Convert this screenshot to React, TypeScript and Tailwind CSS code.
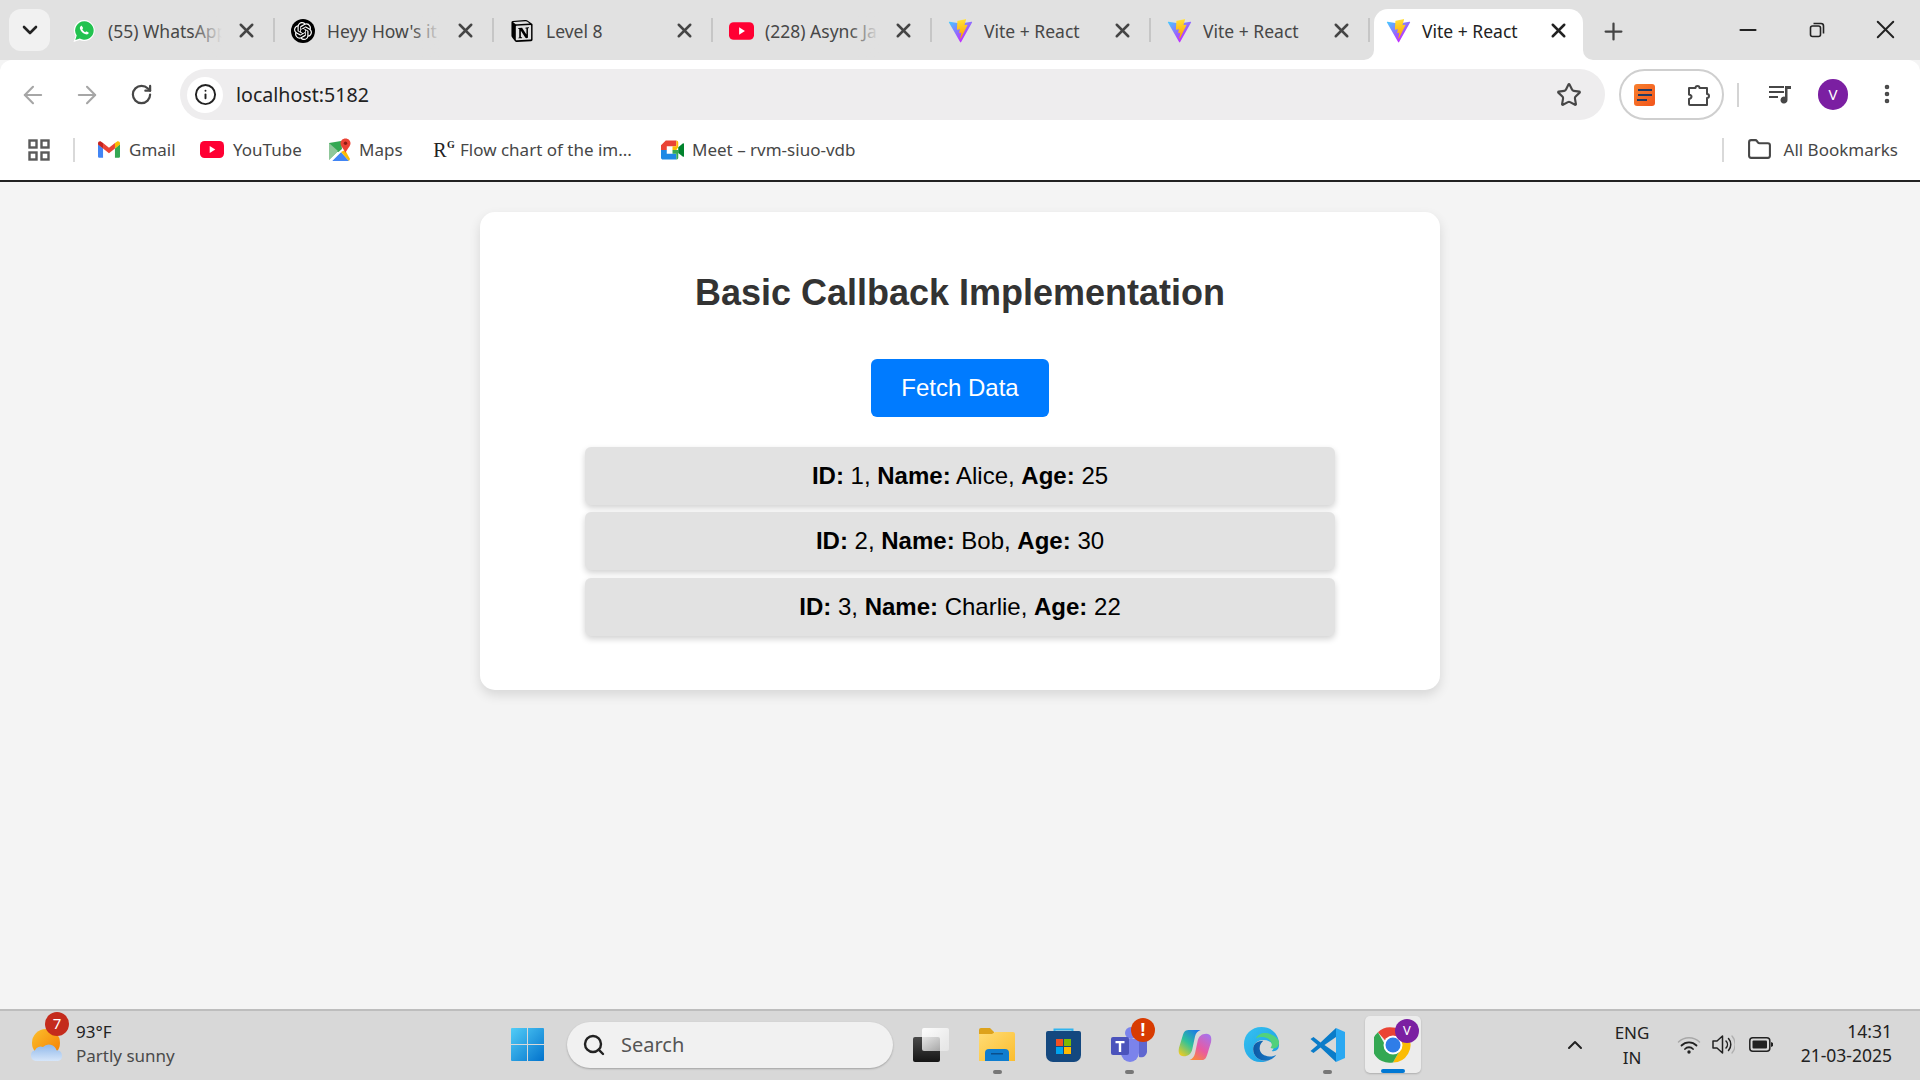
import React from 'react';
import { ArrowLeft, ArrowRight, ChevronDown, ChevronUp, Folder, Info, Minus, MoreVertical, Plus, RotateCw, Search, Star, X } from 'lucide-react';
import { SiNotion, SiOpenai } from 'react-icons/si';

function ViteIcon() {
  return (
    <svg viewBox="0 0 410 404" className="h-[24px] w-[25px]" aria-hidden>
      <defs>
        <linearGradient id="vite-a" x1="6" y1="33" x2="235" y2="344" gradientUnits="userSpaceOnUse">
          <stop stopColor="#41D1FF" />
          <stop offset="1" stopColor="#BD34FE" />
        </linearGradient>
        <linearGradient id="vite-b" x1="194" y1="8" x2="236" y2="293" gradientUnits="userSpaceOnUse">
          <stop stopColor="#FFEA83" />
          <stop offset="0.08" stopColor="#FFDD35" />
          <stop offset="1" stopColor="#FFA800" />
        </linearGradient>
      </defs>
      <path d="M399.641 59.5246L215.643 388.545C211.844 395.338 202.084 395.378 198.228 388.618L10.5817 59.5563C6.38087 52.1896 12.6802 43.2665 21.0281 44.7586L205.223 77.6824C206.398 77.8924 207.601 77.8904 208.776 77.6763L389.119 44.8058C397.439 43.2894 403.768 52.1434 399.641 59.5246Z" fill="url(#vite-a)" />
      <path d="M292.965 1.5744L156.801 28.2552C154.563 28.6937 152.906 30.5903 152.771 32.8664L144.395 174.33C144.198 177.662 147.258 180.248 150.51 179.498L188.42 170.749C191.967 169.931 195.172 173.055 194.443 176.622L183.18 231.775C182.422 235.487 185.907 238.661 189.532 237.56L212.947 230.446C216.577 229.344 220.065 232.527 219.297 236.242L201.398 322.875C200.278 328.294 207.486 331.249 210.492 326.603L212.5 323.5L323.454 102.072C325.312 98.3645 322.108 94.137 318.036 94.9228L279.014 102.454C275.347 103.161 272.227 99.746 273.262 96.1583L298.731 7.86689C299.767 4.27314 296.636 0.855181 292.965 1.5744Z" fill="url(#vite-b)" />
    </svg>
  );
}

function WhatsappIcon() {
  return (
    <svg viewBox="0 0 24 24" className="h-[24px] w-[24px]" aria-hidden>
      <path d="M12.500 1A10.500 10.500 0 0 0 3.500 17L1.500 23l6.200-2A10.500 10.500 0 1 0 12.500 1z" fill="#fff" />
      <path d="M12.500 2.200A9.300 9.300 0 0 0 4.700 16.600L3.300 21l4.500-1.400A9.300 9.300 0 1 0 12.500 2.200z" fill="#22c24f" />
      <path d="M9 7c.3-.3.7-.3.9 0l1.100 1.700c.2.3.1.6-.1.8l-.6.7c.6 1.300 1.700 2.400 3 3l.7-.6c.2-.2.5-.3.8-.1l1.700 1.100c.3.2.3.6 0 .9-.7.800-1.700 1.100-2.700.8-2.900-.8-5.100-3-5.900-5.900-.2-1 .3-1.700 1.100-2.400z" fill="#fff" />
    </svg>
  );
}

function YoutubeIcon({ small }: { small?: boolean }) {
  return (
    <svg viewBox="0 0 24 17" className={small ? 'h-[17px] w-[24px]' : 'h-[18px] w-[25px]'} aria-hidden>
      <rect width="24" height="17" rx="4.500" fill="#ff0033" />
      <path d="M9.700 5v7l5.600-3.500z" fill="#fff" />
    </svg>
  );
}

function GmailIcon() {
  return (
    <svg viewBox="0 0 24 18" className="h-[17px] w-[22px]" aria-hidden>
      <path d="M0 3v13.500C0 17.300.7 18 1.500 18H5.500V8L0 3z" fill="#4285f4" />
      <path d="M24 3v13.500c0 .8-.7 1.500-1.500 1.500h-4V8L24 3z" fill="#34a853" />
      <path d="M18.500 2v6L24 3.500V2.200C24 .4 22 -.6 20.500.5z" fill="#fbbc04" />
      <path d="M5.500 8V2L12 7l6.500-5v6L12 13z" fill="#ea4335" />
      <path d="M0 2.200V3.500L5.500 8V2L3.500.5C2 -.6 0 .4 0 2.200z" fill="#c5221f" />
    </svg>
  );
}

function MapsIcon() {
  return (
    <svg viewBox="0 0 24 24" className="h-[24px] w-[24px]" aria-hidden>
      <path d="M1 5l12-2 1 8-13 11z" fill="#34a853" />
      <path d="M4 23l9-9 8 9z" fill="#4285f4" />
      <path d="M13 14l8 9 1-2-5-9z" fill="#fbbc04" />
      <path d="M1 22l8-8 4 0-9 9z" fill="#fff" />
      <path d="M1 5l9 8-9 9z" fill="#8fc79a" />
      <path d="M17.500 0.500c-3 0-5 2.200-5 4.800 0 3.200 3.500 5.700 5 9.700 1.500-4 5-6.500 5-9.700 0-2.600-2-4.800-5-4.800z" fill="#ea4335" />
      <circle cx="17.500" cy="5.300" r="1.700" fill="#8c1c13" />
    </svg>
  );
}

function MeetIcon() {
  return (
    <svg viewBox="0 0 24 20" className="h-[20px] w-[23px]" aria-hidden>
      <path d="M5 0h11v6H6v4H0V5z" fill="#ea4335" />
      <path d="M0 10h6v4h10v6H2c-1 0-2-1-2-2z" fill="#1e88e5" />
      <path d="M16 0c1 0 2 1 2 2v5l-2 3h-4V6h4z" fill="#fbbc04" />
      <path d="M12 10h6v8c0 1-1 2-2 2v-6h-4z" fill="#34a853" />
      <path d="M18 7l5-4c.5-.3 1 0 1 .6v12.800c0 .6-.5.9-1 .6l-5-4z" fill="#00832d" />
    </svg>
  );
}

function ExtensionIcon() {
  return (
    <svg viewBox="0 0 24 24" className="h-[24px] w-[24px]" fill="none" stroke="#474747" strokeWidth="2" strokeLinejoin="round" aria-hidden>
      <path d="M2 5h6.500a2 2 0 0 1 4 0H20v6a2 2 0 0 1 0 4v7H3a1 1 0 0 1-1-1v-5c2-.5 2.500-1.500 2.500-2.500S4 12 2 11.500z" />
    </svg>
  );
}

function MediaIcon() {
  return (
    <svg viewBox="0 0 24 24" className="h-[24px] w-[24px]" fill="#474747" aria-hidden>
      <path d="M1 4h15v2H1zM1 9h15v2H1zM1 14h9v2H1z" />
      <path d="M17 4h6v3h-3.500v11a3.500 3.500 0 1 1-2.500-3.300z" />
    </svg>
  );
}

function AppsIcon() {
  return (
    <svg viewBox="0 0 22 22" className="h-[22px] w-[22px]" fill="none" stroke="#5a5a5a" strokeWidth="2.400" aria-hidden>
      <rect x="1.500" y="1.500" width="7" height="7" />
      <rect x="13.500" y="1.500" width="7" height="7" />
      <rect x="1.500" y="13.500" width="7" height="7" />
      <rect x="13.500" y="13.500" width="7" height="7" />
    </svg>
  );
}

function RestoreIcon() {
  return (
    <svg viewBox="0 0 16 16" className="h-[16px] w-[16px]" fill="none" stroke="#222" strokeWidth="1.600" aria-hidden>
      <rect x="1.500" y="4" width="10" height="10.500" rx="2" />
      <path d="M4.500 1.500h7.500a2.500 2.500 0 0 1 2.500 2.500v7.500" />
    </svg>
  );
}

function WeatherIcon() {
  return (
    <svg viewBox="0 0 36 36" className="h-[36px] w-[36px]" aria-hidden>
      <defs>
        <linearGradient id="sun" x1="0" y1="0" x2="1" y2="1">
          <stop stopColor="#fbc02d" />
          <stop offset="1" stopColor="#f57c00" />
        </linearGradient>
        <linearGradient id="cloud" x1="0" y1="0" x2="0" y2="1">
          <stop stopColor="#8fb8ea" />
          <stop offset="1" stopColor="#d6e6fa" />
        </linearGradient>
      </defs>
      <circle cx="16" cy="16" r="14" fill="url(#sun)" />
      <path d="M6 34a5.500 5.500 0 0 1-1-10.800A6 6 0 0 1 13 20a8 8 0 0 1 13.500 3.200A5.500 5.500 0 0 1 28 34z" fill="url(#cloud)" />
    </svg>
  );
}

function WindowsIcon() {
  return (
    <svg viewBox="0 0 35 35" className="h-[35px] w-[35px]" aria-hidden>
      <defs>
        <linearGradient id="win" x1="0" y1="0" x2="1" y2="1">
          <stop stopColor="#52cdf7" />
          <stop offset="1" stopColor="#0272cc" />
        </linearGradient>
      </defs>
      <path d="M1 2a1 1 0 0 1 1-1h15v16H1zM18 1h15a1 1 0 0 1 1 1v15H18zM1 18h16v16H2a1 1 0 0 1-1-1zM18 18h16v15a1 1 0 0 1-1 1H18z" fill="url(#win)" />
    </svg>
  );
}

function TaskViewIcon() {
  return (
    <svg viewBox="0 0 36 34" className="h-[34px] w-[36px]" aria-hidden>
      <defs>
        <linearGradient id="tv-dark" x1="0" y1="0" x2="0" y2="1">
          <stop stopColor="#4a4a4a" />
          <stop offset="1" stopColor="#151515" />
        </linearGradient>
        <linearGradient id="tv-light" x1="0" y1="0" x2="1" y2="1">
          <stop stopColor="#ffffff" stopOpacity="0.95" />
          <stop offset="1" stopColor="#f0f0f0" stopOpacity="0.55" />
        </linearGradient>
      </defs>
      <rect x="0" y="9" width="27" height="25" rx="2" fill="url(#tv-dark)" />
      <rect x="9" y="0" width="27" height="23" rx="2" fill="url(#tv-light)" />
    </svg>
  );
}

function FilesIcon() {
  return (
    <svg viewBox="0 0 36 33" className="h-[33px] w-[36px]" aria-hidden>
      <defs>
        <linearGradient id="files" x1="0" y1="0" x2="1" y2="1">
          <stop stopColor="#ffdc75" />
          <stop offset="1" stopColor="#fbbd2e" />
        </linearGradient>
      </defs>
      <path d="M0 2a2 2 0 0 1 2-2h9l4 4 0 2H0z" fill="#dda21b" />
      <path d="M0 6l13 0 3-2h18a2 2 0 0 1 2 2v27H0z" fill="url(#files)" />
      <path d="M6 25a4 4 0 0 1 4-4h16a4 4 0 0 1 4 4v8H6z" fill="#0f7dcf" />
      <rect x="12" y="25" width="12" height="1.500" fill="#0a4f8c" />
    </svg>
  );
}

function StoreIcon() {
  return (
    <svg viewBox="0 0 35 35" className="h-[35px] w-[35px]" aria-hidden>
      <path d="M8.500 8V2.500h18V8" fill="none" stroke="#30b3ee" strokeWidth="2" />
      <path d="M0 6a2 2 0 0 1 2-2h31a2 2 0 0 1 2 2v22a7 7 0 0 1-7 7H7a7 7 0 0 1-7-7z" fill="#14487f" />
      <rect x="10" y="12" width="7" height="7" fill="#f25022" />
      <rect x="18" y="12" width="7" height="7" fill="#7fba00" />
      <rect x="10" y="20" width="7" height="7" fill="#00a4ef" />
      <rect x="18" y="20" width="7" height="7" fill="#ffb900" />
    </svg>
  );
}

function TeamsIcon() {
  return (
    <svg viewBox="0 0 36 36" className="h-[36px] w-[36px]" aria-hidden>
      <circle cx="20" cy="6" r="6" fill="#7b83eb" />
      <path d="M10 12h18v14a9 9 0 0 1-18 0z" fill="#7b83eb" />
      <path d="M28 12h8v12a6 6 0 0 1-8 6z" fill="#5f67d0" />
      <rect x="0" y="10" width="18" height="18" rx="2" fill="#4b53bc" />
      <path d="M4.500 14h9v2.300h-3.300V25H7.800v-8.700H4.500z" fill="#fff" />
    </svg>
  );
}

function CopilotIcon() {
  return (
    <svg viewBox="0 0 36 34" className="h-[32px] w-[34px]" aria-hidden>
      <defs>
        <linearGradient id="cop-a" x1="0.800" y1="0" x2="0.100" y2="1">
          <stop stopColor="#1a78e8" />
          <stop offset="0.5" stopColor="#2fc29a" />
          <stop offset="1" stopColor="#f6cc1f" />
        </linearGradient>
        <linearGradient id="cop-b" x1="0.800" y1="0" x2="0.200" y2="1">
          <stop stopColor="#a873ea" />
          <stop offset="0.55" stopColor="#e85aa2" />
          <stop offset="1" stopColor="#fa8a3a" />
        </linearGradient>
      </defs>
      <path d="M24 1H11C7 1 6 4 5 7L1 20c-1 5 0 9 5 9 5 0 8-3 9-7l3-14c1-4 3-6 6-7z" fill="url(#cop-a)" />
      <path d="M12 33h13c4 0 5-3 6-6l4-13c1-5 0-9-5-9-5 0-8 3-9 7l-3 14c-1 4-3 6-6 7z" fill="url(#cop-b)" />
    </svg>
  );
}

function EdgeIcon() {
  return (
    <svg viewBox="0 0 40 40" className="h-[37px] w-[37px]" aria-hidden>
      <defs>
        <linearGradient id="edge-a" x1="0" y1="0" x2="1" y2="1">
          <stop stopColor="#35c1f1" />
          <stop offset="1" stopColor="#1b9de2" />
        </linearGradient>
        <linearGradient id="edge-b" x1="0" y1="0" x2="1" y2="0">
          <stop stopColor="#0c59a4" />
          <stop offset="1" stopColor="#1b7fd0" />
        </linearGradient>
      </defs>
      <path d="M20 1C9 1 1 9 1 20c0 10 7 19 18 19 4 0 7-1 9-2-8 2-17-3-17-12 0-7 6-10 11-10 6 0 9 3 10 5 2 3 1 6-1 7 4 1 8-1 8-7C39 9 31 1 20 1z" fill="url(#edge-a)" />
      <path d="M11 25c0 9 9 14 17 12 3-1 6-3 8-6-3 2-8 3-12 1-3-1-6-4-6-8s2-6 4-8c-6 0-11 3-11 9z" fill="url(#edge-b)" />
      <path d="M39 17c0 6-4 8-8 7-1 0-1 0-1-1 1-1 2-3 0-6-1-2-4-5-10-5-2 0-4 .5-6 1.500C16 8 24 6 30 9c5 2 8 5 9 8z" fill="#52d17c" />
    </svg>
  );
}

function VscodeIcon() {
  return (
    <svg viewBox="0 0 36 36" className="h-[36px] w-[36px]" aria-hidden>
      <path d="M27 1L11.500 15.500 4.500 10 1.500 12l7 6-7 6 3 2 7-5.500L27 35v-9l-11.500-8L27 10z" fill="#0a7cc9" />
      <path d="M27 1l9 4v26l-9 4z" fill="#2aa8f2" />
    </svg>
  );
}

function ChromeIcon() {
  return (
    <svg viewBox="0 0 48 48" className="h-[38px] w-[38px]" aria-hidden>
      <path d="M24 2a22 22 0 0 1 19.100 11H24a11 11 0 0 0-9.500 5.500L5 7.900A22 22 0 0 1 24 2z" fill="#ea4335" />
      <path d="M43.100 13A22 22 0 0 1 24 46l9.500-16.500A11 11 0 0 0 33.500 18.500 11 11 0 0 0 24 13z" fill="#fbbc04" />
      <path d="M24 46A22 22 0 0 1 5 7.900l9.500 16.600A11 11 0 0 0 24 35a11 11 0 0 0 9.500-5.500z" fill="#34a853" />
      <circle cx="24" cy="24" r="12" fill="#fff" />
      <circle cx="24" cy="24" r="9.500" fill="#2f7de8" />
    </svg>
  );
}

function WifiIcon() {
  return (
    <svg viewBox="0 0 24 18" className="h-[18px] w-[24px] shrink-0" fill="none" strokeLinecap="round" aria-hidden>
      <path d="M1.500 6a15 15 0 0 1 21 0" stroke="#a8a8a8" strokeWidth="1.500" />
      <path d="M4.500 9.500a10.500 10.500 0 0 1 15 0" stroke="#222" strokeWidth="1.800" />
      <path d="M8 13a5.500 5.500 0 0 1 8 0" stroke="#222" strokeWidth="1.800" />
      <circle cx="12" cy="16" r="1.700" fill="#222" />
    </svg>
  );
}

function SpeakerIcon() {
  return (
    <svg viewBox="0 0 23 21" className="h-[21px] w-[23px] shrink-0" fill="none" strokeLinecap="round" aria-hidden>
      <path d="M1 7h4l5.500-5v17L5 14H1z" stroke="#222" strokeWidth="1.500" strokeLinejoin="round" />
      <path d="M14 7a5 5 0 0 1 0 7" stroke="#222" strokeWidth="1.500" />
      <path d="M16.500 4.500a9 9 0 0 1 0 12" stroke="#222" strokeWidth="1.500" />
      <path d="M20 2a13 13 0 0 1 0 17" stroke="#b0b0b0" strokeWidth="1.300" />
    </svg>
  );
}

function BatteryIcon() {
  return (
    <svg viewBox="0 0 24 15" className="h-[15px] w-[24px] shrink-0" aria-hidden>
      <rect x="0.800" y="0.800" width="20" height="13.400" rx="3" fill="none" stroke="#222" strokeWidth="1.500" />
      <rect x="3.500" y="3.500" width="14.500" height="8" rx="1" fill="#222" />
      <path d="M22 5l2 1v3l-2 1z" fill="#222" />
    </svg>
  );
}

type TabInfo = { title: string; icon: React.ReactNode; fade?: boolean };

const TABS: TabInfo[] = [
  { title: '(55) WhatsApp', fade: true, icon: <WhatsappIcon /> },
  {
    title: "Heyy How's it",
    fade: true,
    icon: (
      <span className="flex h-[24px] w-[24px] items-center justify-center rounded-full bg-black">
        <SiOpenai className="h-[18px] w-[18px] text-white" />
      </span>
    ),
  },
  { title: 'Level 8', icon: <SiNotion className="h-[22px] w-[22px] text-black" /> },
  { title: '(228) Async Ja', fade: true, icon: <YoutubeIcon /> },
  { title: 'Vite + React', icon: <ViteIcon /> },
  { title: 'Vite + React', icon: <ViteIcon /> },
];

function Tab({ tab }: { tab: TabInfo }) {
  return (
    <div className="relative flex h-[51px] w-[219px] shrink-0 items-center pb-[7px]">
      <span className="flex w-[56px] shrink-0 justify-center">{tab.icon}</span>
      <span className="-ml-[4px] w-[114px] overflow-hidden whitespace-nowrap text-[17.5px] text-[#474747]">{tab.title}</span>
      {tab.fade && <span className="absolute left-[136px] top-0 h-full w-[30px] bg-gradient-to-r from-transparent to-[#e1e1e1]" />}
      <span className="absolute left-[161px] top-0 flex h-[43px] w-[58px] items-center justify-center">
        <X className="h-[23px] w-[23px] text-[#454545]" strokeWidth={2.6} />
      </span>
      <span className="absolute right-0 top-[9px] h-[24px] w-[2px] bg-[#c6c6c6]" />
    </div>
  );
}

const BOOKMARKS: { label: string; icon: React.ReactNode; item: string; iconWidth: string; text: string }[] = [
  { label: 'Gmail', icon: <GmailIcon />, item: 'w-[103px]', iconWidth: 'w-[24px]', text: 'ml-[8px]' },
  { label: 'YouTube', icon: <YoutubeIcon small />, item: 'w-[128px]', iconWidth: 'w-[24px]', text: 'ml-[9px]' },
  { label: 'Maps', icon: <MapsIcon />, item: 'w-[103px]', iconWidth: 'w-[24px]', text: 'ml-[7px]' },
  {
    label: 'Flow chart of the im...',
    icon: (
      <span className="relative font-['Liberation_Serif',serif] text-[20px] leading-none text-[#222]">
        R<span className="absolute -right-[8px] top-0 text-[10px] font-bold leading-none">G</span>
      </span>
    ),
    item: 'w-[229px]',
    iconWidth: 'w-[18px]',
    text: 'ml-[11px]',
  },
  { label: 'Meet – rvm-siuo-vdb', icon: <MeetIcon />, item: '', iconWidth: 'w-[24px]', text: 'ml-[8px]' },
];

const USERS = [
  { id: 1, name: 'Alice', age: 25 },
  { id: 2, name: 'Bob', age: 30 },
  { id: 3, name: 'Charlie', age: 22 },
];

function TaskbarApp({ children, dot }: { children: React.ReactNode; dot?: boolean }) {
  return (
    <div className="relative flex h-[57px] w-[66px] shrink-0 items-center justify-center">
      {children}
      {dot && <span className="absolute bottom-[-1px] h-[4px] w-[9px] rounded-full bg-[#777]" />}
    </div>
  );
}

export default function App() {
  return (
    <div className="flex h-screen w-full flex-col overflow-hidden bg-[#f4f4f4] font-['Noto_Sans',sans-serif]">
      {/* Tab strip */}
      <div className="flex h-[60px] shrink-0 items-end bg-[#e1e1e1]">
        <div className="mb-[9px] ml-[9px] mr-[6px] flex h-[42px] w-[41px] shrink-0 items-center justify-center rounded-[12px] bg-[#f1f1f1]">
          <ChevronDown className="h-[24px] w-[24px] text-[#222]" strokeWidth={2.6} />
        </div>
        {TABS.map((tab, i) => (
          <Tab key={i} tab={tab} />
        ))}
        <div className="relative ml-[4px] flex h-[51px] w-[209px] shrink-0 items-center rounded-t-[14px] bg-white pb-[7px]">
          <span className="absolute -left-[10px] bottom-0 h-[10px] w-[10px] bg-white">
            <span className="block h-full w-full rounded-br-[10px] bg-[#e1e1e1]" />
          </span>
          <span className="absolute -right-[10px] bottom-0 h-[10px] w-[10px] bg-white">
            <span className="block h-full w-full rounded-bl-[10px] bg-[#e1e1e1]" />
          </span>
          <span className="flex w-[48px] shrink-0 justify-center"><ViteIcon /></span>
          <span className="whitespace-nowrap text-[17.5px] text-[#222]">Vite + React</span>
          <X className="absolute left-[173px] top-[10px] h-[23px] w-[23px] text-[#222]" strokeWidth={2.6} />
        </div>
        <div className="ml-[17px] flex h-[51px] items-center pb-[7px]">
          <Plus className="h-[27px] w-[27px] text-[#444]" strokeWidth={2} />
        </div>
        <div className="ml-auto flex h-[60px] items-center pb-[1px]">
          <span className="flex w-[69px] justify-center"><Minus className="h-[26px] w-[26px] text-[#222]" strokeWidth={1.8} /></span>
          <span className="flex w-[69px] justify-center"><RestoreIcon /></span>
          <span className="flex w-[69px] justify-center"><X className="h-[31px] w-[31px] text-[#222]" strokeWidth={1.5} /></span>
        </div>
      </div>

      {/* Toolbar */}
      <div className="z-10 flex h-[60px] shrink-0 items-start rounded-t-[12px] bg-white pt-[9px]">
        <div className="flex h-[51px] w-[180px] shrink-0 items-center pl-[11px]">
          <span className="flex w-[44px] justify-center"><ArrowLeft className="h-[28px] w-[28px] text-[#a6a6a6]" strokeWidth={1.8} /></span>
          <span className="ml-[10px] flex w-[44px] justify-center"><ArrowRight className="h-[28px] w-[28px] text-[#a6a6a6]" strokeWidth={1.8} /></span>
          <span className="ml-[10px] flex w-[44px] justify-center"><RotateCw className="h-[23px] w-[23px] text-[#474747]" strokeWidth={2.3} /></span>
        </div>
        <div className="flex h-[51px] w-[1425px] shrink-0 items-center rounded-full bg-[#eeedee] pl-[7px]">
          <span className="flex h-[36px] w-[36px] items-center justify-center rounded-full bg-white">
            <Info className="h-[23px] w-[23px] text-[#222]" strokeWidth={2} />
          </span>
          <span className="ml-[13px] text-[19.6px] text-[#222]">localhost:5182</span>
          <Star className="ml-auto mr-[23px] h-[26px] w-[26px] text-[#474747]" strokeWidth={2} />
        </div>
        <div className="ml-[14px] flex h-[51px] w-[105px] shrink-0 items-center rounded-full border-2 border-[#cfcfcf]">
          <span className="ml-[13px] flex h-[22px] w-[21px] flex-col items-center justify-center gap-[3px] rounded-[3px] bg-gradient-to-br from-[#f77f2e] to-[#f2541b]">
            <span className="h-[2px] w-[14px] bg-[#233a63]" />
            <span className="h-[2px] w-[14px] bg-[#233a63]" />
            <span className="h-[2px] w-[10px] self-start ml-[3px] bg-[#233a63]" />
          </span>
          <span className="ml-[32px]"><ExtensionIcon /></span>
        </div>
        <span className="ml-[13px] mt-[14px] h-[24px] w-[2px] shrink-0 bg-[#d4d4d4]" />
        <span className="ml-[29px] mt-[13px] shrink-0"><MediaIcon /></span>
        <span className="ml-[26px] mt-[10px] flex h-[31px] w-[30px] shrink-0 items-center justify-center rounded-full bg-[#7b1fa2] text-[15px] text-white">V</span>
        <span className="ml-[27px] mt-[13px] shrink-0"><MoreVertical className="h-[24px] w-[24px] text-[#474747]" strokeWidth={2.6} /></span>
      </div>

      {/* Bookmarks bar */}
      <div className="flex h-[62px] shrink-0 items-center border-b-2 border-[#222] bg-white pb-[1px]">
        <span className="ml-[28px] flex w-[22px] shrink-0"><AppsIcon /></span>
        <span className="ml-[23px] mr-[22px] h-[24px] w-[2px] shrink-0 bg-[#d9d9d9]" />
        {BOOKMARKS.map((b) => (
          <div key={b.label} className={`flex shrink-0 items-center ${b.item}`}>
            <span className={`flex shrink-0 justify-center ${b.iconWidth}`}>{b.icon}</span>
            <span className={`whitespace-nowrap text-[17px] text-[#474747] ${b.text}`}>{b.label}</span>
          </div>
        ))}
        <span className="ml-auto h-[24px] w-[2px] shrink-0 bg-[#d9d9d9]" />
        <Folder className="ml-[23px] h-[25px] w-[25px] shrink-0 text-[#474747]" strokeWidth={2} />
        <span className="ml-[12px] mr-[22px] whitespace-nowrap text-[17px] text-[#474747]">All Bookmarks</span>
      </div>

      {/* Page */}
      <main className="flex min-h-0 flex-1 flex-col items-center pt-[30px] font-['Liberation_Sans',Arial,sans-serif]">
        <div className="flex w-[960px] flex-col items-center rounded-[15px] bg-white pb-[54px] pt-[54px] shadow-[0_5px_12px_rgba(0,0,0,0.12)]">
          <h1 className="text-[36px] leading-[54px] font-bold text-[#333]">Basic Callback Implementation</h1>
          <button type="button" className="mt-[39px] h-[58px] w-[178px] rounded-[6px] bg-[#007bff] text-[24px] text-white">
            Fetch Data
          </button>
          <div className="mt-[30px] flex w-[750px] flex-col gap-[7.33px]">
            {USERS.map((u) => (
              <div key={u.id} className="flex h-[58px] items-center justify-center rounded-[6px] bg-[#e2e2e2] text-[24px] text-black shadow-[0_3px_6px_rgba(0,0,0,0.18)]">
                <span>
                  <strong>ID:</strong> {u.id}, <strong>Name:</strong> {u.name}, <strong>Age:</strong> {u.age}
                </span>
              </div>
            ))}
          </div>
        </div>
      </main>

      {/* Windows taskbar */}
      <div className="flex h-[71px] shrink-0 items-center border-t-2 border-[#bdbdbd] bg-[#d8d8d8] pb-[2px]">
        <div className="relative ml-[30px] flex w-[480px] shrink-0 items-center">
          <WeatherIcon />
          <span className="absolute left-[15px] -top-[8px] flex h-[24px] w-[24px] items-center justify-center rounded-full bg-[#c42b1c] text-[15px] text-white">7</span>
          <div className="mb-[2px] ml-[10px] flex flex-col text-[17px] leading-[24px]">
            <span className="text-[#222]">93°F</span>
            <span className="text-[#4a4a4a]">Partly sunny</span>
          </div>
        </div>
        <WindowsIcon />
        <div className="ml-[22px] flex h-[46px] w-[326px] shrink-0 items-center rounded-full bg-[#f1f1f1] shadow-[0_1px_2px_rgba(0,0,0,0.25)]">
          <Search className="ml-[15px] h-[24px] w-[24px] text-[#222]" strokeWidth={2.4} />
          <span className="ml-[15px] text-[20px] text-[#555]">Search</span>
        </div>
        <div className="ml-[5px] flex items-center">
          <TaskbarApp><TaskViewIcon /></TaskbarApp>
          <TaskbarApp dot><FilesIcon /></TaskbarApp>
          <TaskbarApp><StoreIcon /></TaskbarApp>
          <TaskbarApp dot>
            <TeamsIcon />
            <span className="absolute left-[35px] top-[2px] flex h-[24px] w-[24px] items-center justify-center rounded-full bg-[#d83b01] text-[17px] font-bold text-white">!</span>
          </TaskbarApp>
          <TaskbarApp><CopilotIcon /></TaskbarApp>
          <TaskbarApp><EdgeIcon /></TaskbarApp>
          <TaskbarApp dot><VscodeIcon /></TaskbarApp>
          <div className="relative ml-[5px] flex h-[57px] w-[56px] shrink-0 items-center justify-center rounded-[5px] bg-[#ececec] shadow-[0_1px_2px_rgba(0,0,0,0.2)]">
            <ChromeIcon />
            <span className="absolute right-[2px] top-[3px] flex h-[24px] w-[24px] items-center justify-center rounded-full bg-[#7b1fa2] text-[13px] text-white">V</span>
            <span className="absolute bottom-0 h-[4px] w-[24px] rounded-full bg-[#0078d4]" />
          </div>
        </div>
        <ChevronUp className="ml-[142px] h-[24px] w-[24px] shrink-0 text-[#222]" strokeWidth={2} />
        <div className="ml-[15px] flex w-[60px] shrink-0 flex-col items-center text-[17px] leading-[25px] text-[#222]">
          <span>ENG</span>
          <span>IN</span>
        </div>
        <span className="ml-[15px]"><WifiIcon /></span>
        <span className="ml-[11px]"><SpeakerIcon /></span>
        <span className="ml-[14px]"><BatteryIcon /></span>
        <div className="mb-[3px] ml-auto mr-[28px] flex flex-col items-end text-[17.5px] leading-[24px] text-[#222]">
          <span>14:31</span>
          <span>21-03-2025</span>
        </div>
      </div>
    </div>
  );
}
